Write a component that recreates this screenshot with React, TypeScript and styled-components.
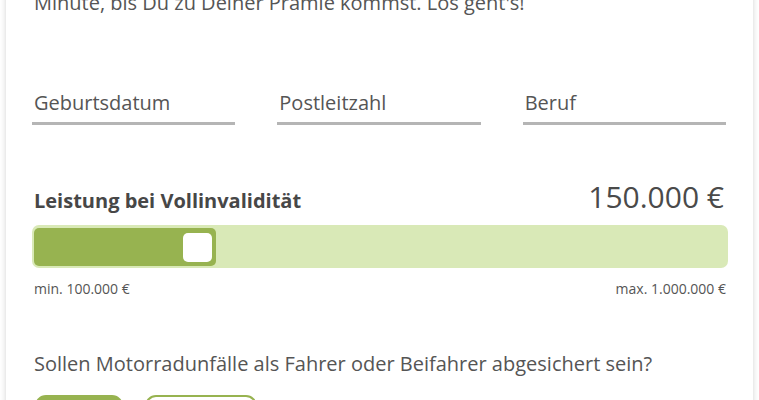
import React from "react";
import styled, { createGlobalStyle } from "styled-components";

const Global = createGlobalStyle`
  html, body { margin: 0; padding: 0; background: #ffffff; }
  body { font-family: "Open Sans", "Liberation Sans", sans-serif; color: #4d4d4d; overflow: hidden; }
`;

const Page = styled.div`
  padding: 0 6px;
  height: 400px;
  overflow: hidden;
`;

const Card = styled.div`
  background: #fff;
  box-shadow: 0 0 6px rgba(0, 0, 0, 0.18);
  margin-top: -12px;
  padding: 0 25px 40px 26px;
`;

const Intro = styled.p`
  margin: 0 0 0 2px;
  font-size: 20px;
  line-height: 30px;
  color: #555;
`;

const Fields = styled.div`
  display: grid;
  grid-template-columns: repeat(3, 1fr);
  column-gap: 42px;
  margin-top: 70px;
  padding-right: 2px;
`;

const Field = styled.div`
  padding: 0 2px 4px;
  border-bottom: 3px solid #b5b5b5;
  font-size: 20px;
  line-height: 30px;
  color: #555;
`;

const SliderHead = styled.div`
  display: flex;
  justify-content: space-between;
  align-items: baseline;
  margin-top: 54px;
  padding: 0 4px 0 2px;
`;

const SliderLabel = styled.span`
  font-weight: 700;
  font-size: 20px;
  color: #474747;
`;

const SliderValue = styled.span`
  font-size: 30px;
  line-height: 36px;
  color: #4a4a4a;
`;

const Track = styled.div`
  margin-top: 10px;
  height: 43px;
  box-sizing: border-box;
  padding: 3px 2px 2px;
  background: #d9e9b7;
  border-radius: 7px;
  display: flex;
`;

const Fill = styled.div`
  background: #97b350;
  border-radius: 5px;
  display: flex;
  justify-content: flex-end;
  align-items: center;
  padding-right: 4px;
  box-sizing: border-box;
`;

const Thumb = styled.div`
  width: 29px;
  height: 29px;
  background: #fff;
  border-radius: 5px;
`;

const Range = styled.div`
  display: flex;
  justify-content: space-between;
  margin-top: 12px;
  padding: 0 2px;
  font-size: 14px;
  line-height: 18px;
  color: #555;
`;

const Question = styled.p`
  margin: 51px 0 0 2px;
  font-size: 20px;
  line-height: 30px;
  color: #555;
`;

const Buttons = styled.div`
  display: flex;
  gap: 22px;
  margin-top: 16px;
  padding-left: 3px;
`;

const Choice = styled.button<{ $active?: boolean }>`
  font-family: inherit;
  font-size: 20px;
  line-height: 30px;
  height: 60px;
  min-width: ${(p) => (p.$active ? "88px" : "112px")};
  border-radius: 11px;
  border: 2px solid #97b350;
  background: ${(p) => (p.$active ? "#97b350" : "#fff")};
  color: ${(p) => (p.$active ? "#fff" : "#97b350")};
  padding: 0 16px;
`;

export default function App() {
  const fillPct = 26.3;
  return (
    <>
      <Global />
      <Page>
        <Card>
          <Intro>Minute, bis Du zu Deiner Prämie kommst. Los geht's!</Intro>
          <Fields>
            <Field>Geburtsdatum</Field>
            <Field>Postleitzahl</Field>
            <Field>Beruf</Field>
          </Fields>
          <SliderHead>
            <SliderLabel>Leistung bei Vollinvalidität</SliderLabel>
            <SliderValue>150.000 €</SliderValue>
          </SliderHead>
          <Track>
            <Fill style={{ width: `${fillPct}%` }}>
              <Thumb />
            </Fill>
          </Track>
          <Range>
            <span>min. 100.000 €</span>
            <span>max. 1.000.000 €</span>
          </Range>
          <Question>Sollen Motorradunfälle als Fahrer oder Beifahrer abgesichert sein?</Question>
          <Buttons>
            <Choice $active>Ja</Choice>
            <Choice>Nein</Choice>
          </Buttons>
        </Card>
      </Page>
    </>
  );
}
